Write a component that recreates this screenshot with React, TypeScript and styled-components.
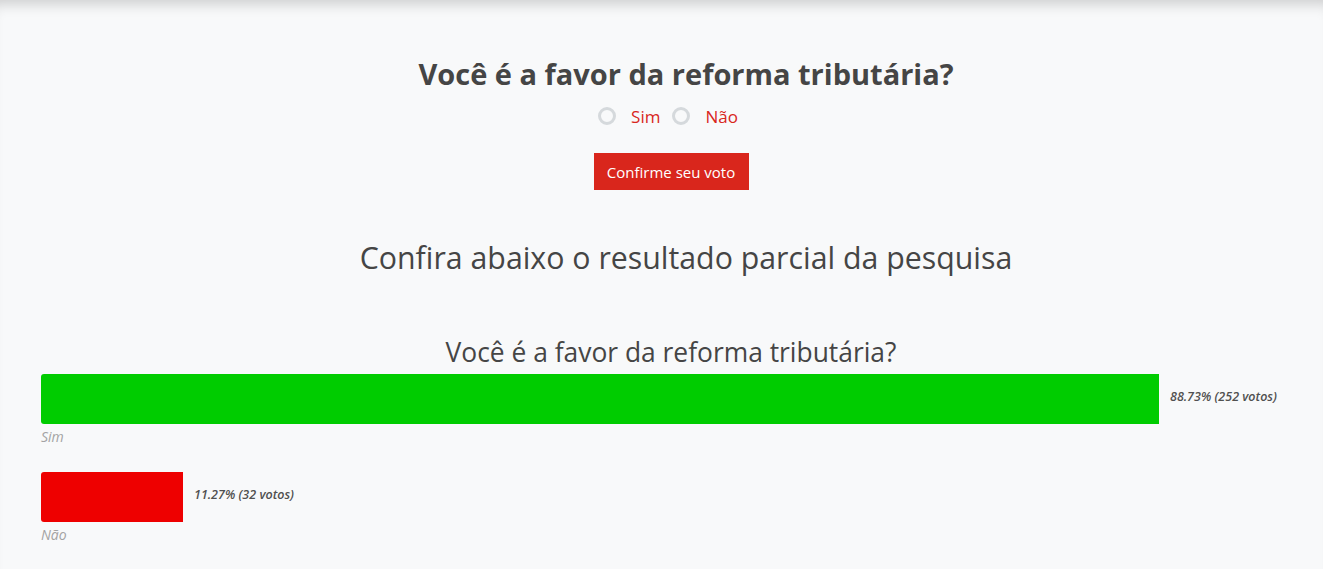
import React from "react";
import styled, { createGlobalStyle } from "styled-components";

const Global = createGlobalStyle`
  html, body { margin: 0; padding: 0; background: #f8f9fa; }
  body { font-family: "Open Sans", "Noto Sans", sans-serif; color: #444; }
`;

const Page = styled.div`
  min-height: 569px;
  box-sizing: border-box;
  background: #f8f9fa;
  box-shadow: inset 0 14px 14px -10px rgba(0, 0, 0, 0.18);
  padding: 52px 22px 0 41px;
`;

const Form = styled.form`
  display: flex;
  flex-direction: column;
  align-items: center;
`;

const Question = styled.h1`
  margin: 0;
  padding-left: 30px;
  font-size: 29px;
  line-height: 44px;
  font-weight: 700;
  color: #454545;
`;

const Options = styled.div`
  display: flex;
  align-items: center;
  gap: 12px;
  margin-top: 7px;
  margin-right: 6px;
  height: 26px;
`;

const Option = styled.label`
  display: flex;
  align-items: center;
  gap: 15px;
  font-size: 17px;
  color: #d9261c;
`;

const Radio = styled.span`
  width: 12px;
  height: 12px;
  border-radius: 50%;
  border: 3px solid #d5d9dc;
  background: #f8f9fa;
`;

const Button = styled.button`
  margin-top: 24px;
  width: 155px;
  height: 37px;
  border: none;
  background: #d9261c;
  color: #fff;
  font-family: inherit;
  font-size: 15px;
  font-weight: 500;
  cursor: pointer;
`;

const ResultsTitle = styled.h2`
  margin: 46px 0 0;
  padding-left: 30px;
  text-align: center;
  font-size: 30.3px;
  font-weight: 400;
  line-height: 44px;
  color: #454545;
`;

const PollTitle = styled.h3`
  margin: 54px 0 0;
  text-align: center;
  font-size: 26.4px;
  font-weight: 400;
  line-height: 36px;
  color: #454545;
`;

const Result = styled.div`
  margin-top: 4px;
  & + & {
    margin-top: 26px;
  }
`;

const BarRow = styled.div`
  display: flex;
  align-items: center;
  gap: 11px;
`;

const Bar = styled.div<{ $color: string }>`
  height: 50px;
  border-radius: 3px 0 0 3px;
  background: ${(p) => p.$color};
`;

const Value = styled.span`
  font-size: 12.5px;
  font-style: italic;
  font-weight: 600;
  color: #505050;
  white-space: nowrap;
  margin-bottom: 6px;
`;

const OptionName = styled.div`
  font-size: 14px;
  font-style: italic;
  color: #a3a3a3;
  line-height: 18px;
  margin-top: 4px;
`;

const TRACK = 1260;

const results = [
  { name: "Sim", pct: 88.73, votes: 252, color: "#00cc00" },
  { name: "Não", pct: 11.27, votes: 32, color: "#ee0000" },
];

export default function App() {
  return (
    <>
      <Global />
      <Page>
        <Form onSubmit={(e) => e.preventDefault()}>
          <Question>Você é a favor da reforma tributária?</Question>
          <Options>
            <Option>
              <Radio />
              Sim
            </Option>
            <Option>
              <Radio />
              Não
            </Option>
          </Options>
          <Button type="submit">Confirme seu voto</Button>
        </Form>
        <ResultsTitle>Confira abaixo o resultado parcial da pesquisa</ResultsTitle>
        <PollTitle>Você é a favor da reforma tributária?</PollTitle>
        {results.map((r) => (
          <Result key={r.name}>
            <BarRow>
              <Bar $color={r.color} style={{ width: Math.round((TRACK * r.pct) / 100) }} />
              <Value>
                {r.pct.toFixed(2)}% ({r.votes} votos)
              </Value>
            </BarRow>
            <OptionName>{r.name}</OptionName>
          </Result>
        ))}
      </Page>
    </>
  );
}
